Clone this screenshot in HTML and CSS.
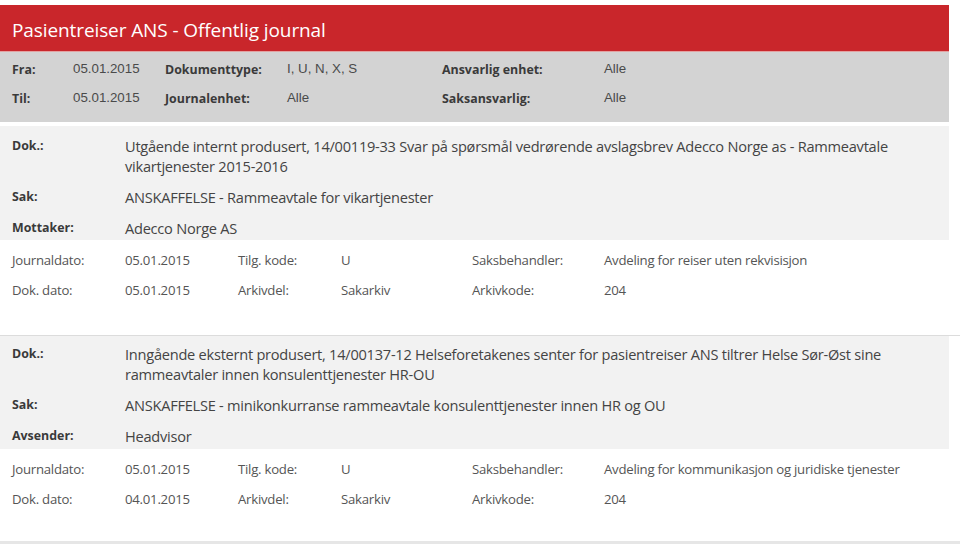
FILE: index.html
```html
<!DOCTYPE html>
<html lang="no">
<head>
<meta charset="utf-8">
<title>Pasientreiser ANS - Offentlig journal</title>
<link rel="stylesheet" href="styles.css">
</head>
<body>
<div class="page">
  <header class="title-bar">
    <h1 class="title">Pasientreiser ANS - Offentlig journal</h1>
  </header>
  <section class="filters">
    <div class="flabel">Fra:</div><div class="fvalue">05.01.2015</div>
    <div class="flabel">Dokumenttype:</div><div class="fvalue">I, U, N, X, S</div>
    <div class="flabel">Ansvarlig enhet:</div><div class="fvalue">Alle</div>
    <div class="flabel">Til:</div><div class="fvalue">05.01.2015</div>
    <div class="flabel">Journalenhet:</div><div class="fvalue">Alle</div>
    <div class="flabel">Saksansvarlig:</div><div class="fvalue">Alle</div>
  </section>

  <article class="entry first">
    <div class="entry-main">
      <div class="elabel">Dok.:</div>
      <div class="evalue">Utgående internt produsert, 14/00119-33 Svar på spørsmål vedrørende avslagsbrev Adecco Norge as - Rammeavtale vikartjenester 2015-2016</div>
      <div class="elabel">Sak:</div>
      <div class="evalue">ANSKAFFELSE - Rammeavtale for vikartjenester</div>
      <div class="elabel">Mottaker:</div>
      <div class="evalue">Adecco Norge AS</div>
    </div>
    <div class="entry-meta">
      <div>Journaldato:</div><div>05.01.2015</div><div>Tilg. kode:</div><div>U</div><div>Saksbehandler:</div><div>Avdeling for reiser uten rekvisisjon</div>
      <div>Dok. dato:</div><div>05.01.2015</div><div>Arkivdel:</div><div>Sakarkiv</div><div>Arkivkode:</div><div>204</div>
    </div>
  </article>

  <article class="entry second">
    <div class="entry-main">
      <div class="elabel">Dok.:</div>
      <div class="evalue">Inngående eksternt produsert, 14/00137-12 Helseforetakenes senter for pasientreiser ANS tiltrer Helse Sør-Øst sine rammeavtaler innen konsulenttjenester HR-OU</div>
      <div class="elabel">Sak:</div>
      <div class="evalue">ANSKAFFELSE - minikonkurranse rammeavtale konsulenttjenester innen HR og OU</div>
      <div class="elabel">Avsender:</div>
      <div class="evalue">Headvisor</div>
    </div>
    <div class="entry-meta">
      <div>Journaldato:</div><div>05.01.2015</div><div>Tilg. kode:</div><div>U</div><div>Saksbehandler:</div><div>Avdeling for kommunikasjon og juridiske tjenester</div>
      <div>Dok. dato:</div><div>04.01.2015</div><div>Arkivdel:</div><div>Sakarkiv</div><div>Arkivkode:</div><div>204</div>
    </div>
  </article>
</div>
</body>
</html>
```
FILE: styles.css
```css
html, body {
  margin: 0;
  padding: 0;
  background: #ffffff;
}
body {
  font-family: "Open Sans", "Noto Sans", sans-serif;
  color: #444;
}
.page {
  width: 960px;
  padding-top: 5px;
}
.title-bar {
  width: 949px;
  height: 47px;
  background: #c9262b;
  border-bottom: 1px solid #e3a2a2;
  box-sizing: border-box;
  display: flex;
  align-items: center;
  padding: 3px 0 0 12px;
}
.title {
  margin: 0;
  font-weight: 400;
  font-size: 19px;
  color: #ffffff;
  letter-spacing: -0.1px;
}
.filters {
  width: 949px;
  height: 70px;
  box-sizing: border-box;
  background: #d3d3d3;
  padding: 3px 0 0 12px;
  display: grid;
  grid-template-columns: 61px 92px 122px 155px 162px 1fr;
  grid-auto-rows: 29px;
  align-items: center;
}
.flabel {
  font-weight: 700;
  font-size: 12.4px;
  color: #3a3a3a;
}
.fvalue {
  font-family: "Liberation Sans", Arial, sans-serif;
  font-size: 13.3px;
  color: #4a4a4a;
  margin-top: -3px;
}
.entry {
  border-top: 1px solid #dcdcdc;
  padding-bottom: 35px;
}
.entry.first {
  border-top: none;
  margin-top: 4px;
}
.entry.second {
  border-bottom: 3px solid #e6e6e6;
  padding-bottom: 32px;
}
.entry-main {
  width: 949px;
  box-sizing: border-box;
  background: #f2f2f2;
  padding: 10px 0 2px 12px;
  display: grid;
  grid-template-columns: 113px 1fr;
  row-gap: 11px;
  line-height: 20px;
}
.entry.second .entry-main {
  padding-top: 8px;
  padding-bottom: 3px;
}
.elabel {
  font-weight: 700;
  font-size: 12.4px;
  color: #3a3a3a;
}
.evalue {
  font-size: 14.6px;
  color: #444;
  padding-right: 50px;
  letter-spacing: -0.25px;
}
.entry-meta {
  padding: 10px 0 0 12px;
  display: grid;
  grid-template-columns: 113px 113px 103px 131px 132px 1fr;
  grid-auto-rows: 20px;
  row-gap: 10px;
  line-height: 20px;
  font-size: 13.2px;
  color: #555;
  letter-spacing: -0.25px;
}
```
